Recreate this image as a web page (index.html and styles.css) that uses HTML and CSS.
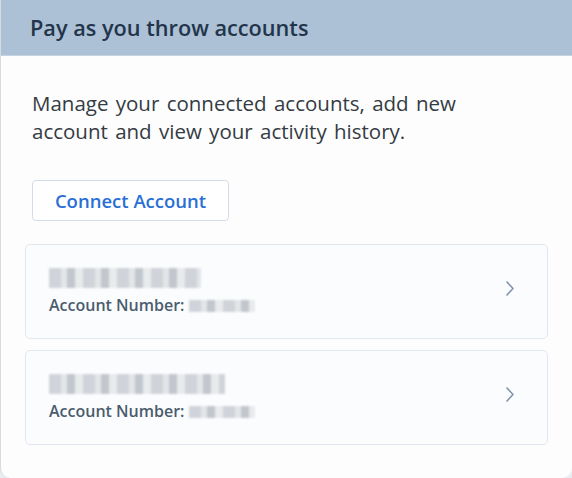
FILE: index.html
```html
<!DOCTYPE html>
<html lang="en">
<head>
    <meta charset="UTF-8">
    <meta name="viewport" content="width=device-width, initial-scale=1.0">
    <title>Pay as you throw accounts</title>
    <link rel="stylesheet" href="styles.css">
</head>
<body>
    <div class="panel">
        <div class="panel-header">
            <h1>Pay as you throw accounts</h1>
        </div>

        <div class="panel-body">
            <p class="intro">Manage your connected accounts, add new account and view your activity history.</p>

            <button class="connect-button">Connect Account</button>

            <div class="accounts">
                <a class="account" href="#">
                    <div class="account-info">
                        <span class="redacted name-one"></span>
                        <div class="account-number">Account Number: <span class="redacted number"></span></div>
                    </div>
                    <svg class="chevron" width="10" height="18" viewBox="0 0 10 18">
                        <polyline points="2,2 8,8.5 2,15" fill="none" stroke="#7f95ad" stroke-width="1.6" stroke-linecap="round" stroke-linejoin="round"/>
                    </svg>
                </a>

                <a class="account" href="#">
                    <div class="account-info">
                        <span class="redacted name-two"></span>
                        <div class="account-number">Account Number: <span class="redacted number"></span></div>
                    </div>
                    <svg class="chevron" width="10" height="18" viewBox="0 0 10 18">
                        <polyline points="2,2 8,8.5 2,15" fill="none" stroke="#7f95ad" stroke-width="1.6" stroke-linecap="round" stroke-linejoin="round"/>
                    </svg>
                </a>
            </div>
        </div>
    </div>
</body>
</html>
```

FILE: styles.css
```css
body {
    margin: 0;
    background-color: #e9edf1;
    font-family: "Open Sans", Arial, sans-serif;
}
.panel {
    height: 478px;
    box-sizing: border-box;
    background: #fdfdfe;
    border-left: 1px solid #d5dbe2;
    border-radius: 0 0 10px 10px;
    overflow: hidden;
}
.panel-header {
    height: 56px;
    display: flex;
    align-items: center;
    padding: 0 29px;
    background-color: #adc1d6;
    border-bottom: 1px solid #c4d2e1;
    box-sizing: border-box;
}
.panel-header h1 {
    margin: 0;
    font-size: 21.7px;
    font-weight: 600;
    color: #22354a;
}
.panel-body {
    padding: 33px 24px 0 31px;
}
.intro {
    margin: 0;
    font-size: 20.5px;
    word-spacing: 2px;
    line-height: 28px;
    color: #343b42;
    max-width: 460px;
}
.connect-button {
    margin-top: 35px;
    width: 197px;
    height: 41px;
    background: #fff;
    border: 1px solid #d3dde9;
    border-radius: 4px;
    font-family: inherit;
    font-size: 18.5px;
    font-weight: 600;
    color: #2a6fd6;
    cursor: pointer;
}
.accounts {
    margin: 23px 0 0 -7px;
    display: flex;
    flex-direction: column;
    gap: 11px;
}
.account {
    display: flex;
    align-items: center;
    justify-content: space-between;
    padding: 23px 32px 23px 23px;
    background: #fbfcfd;
    border: 1px solid #e2e7ee;
    border-radius: 5px;
    text-decoration: none;
}
.account-info {
    display: flex;
    flex-direction: column;
    gap: 7px;
}
.redacted {
    display: inline-block;
    height: 20px;
    background: repeating-linear-gradient(90deg, #c9cdd3 0 12px, #dfe2e6 12px 18px, #b9bec5 18px 26px, #e5e7ea 26px 34px);
    opacity: 0.85;
    filter: blur(1.2px);
}
.name-one {
    width: 152px;
}
.name-two {
    width: 176px;
}
.number {
    width: 66px;
    height: 12px;
    vertical-align: -1px;
}
.account-number {
    font-size: 16px;
    font-weight: 600;
    line-height: 20px;
    color: #4b5c6e;
}
.chevron {
    display: block;
    margin-top: -6px;
}
```
